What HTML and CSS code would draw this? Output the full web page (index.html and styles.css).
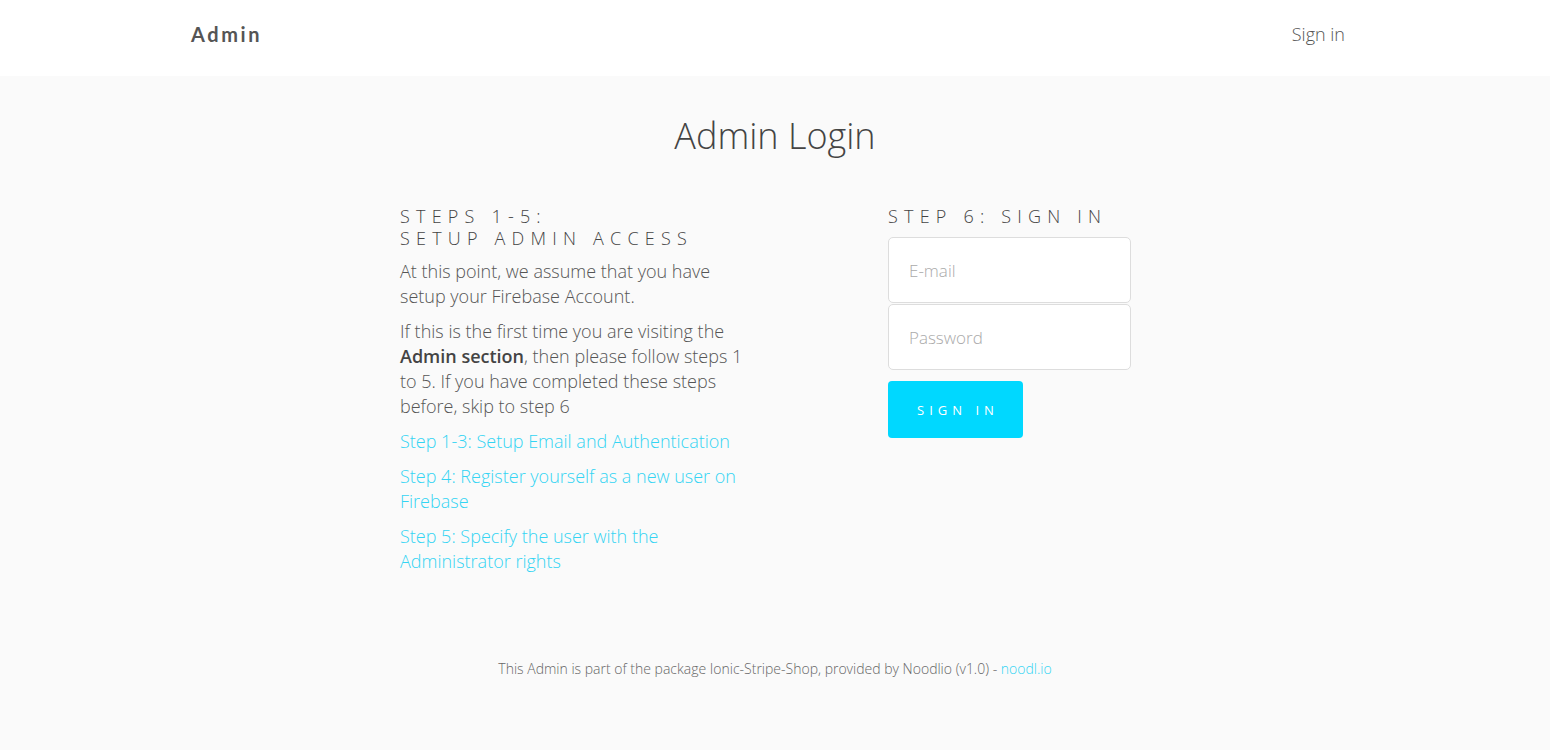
FILE: index.html
```html
<!DOCTYPE html>
<html>
<head>
<meta charset="utf-8">
<link rel="stylesheet" href="styles.css">
</head>
<body>
<header class="topbar">
  <div class="topbar-inner">
    <a class="brand">Admin</a>
    <a class="nav-link">Sign in</a>
  </div>
</header>
<main class="main">
  <h1 class="title">Admin Login</h1>
  <div class="columns">
    <section class="col-left">
      <h3 class="step-heading">Steps 1-5:<br>Setup admin access</h3>
      <p>At this point, we assume that you have setup your Firebase Account.</p>
      <p>If this is the first time you are visiting the <b>Admin section</b>, then please follow steps 1 to 5. If you have completed these steps before, skip to step 6</p>
      <p><a class="link">Step 1-3: Setup Email and Authentication</a></p>
      <p><a class="link">Step 4: Register yourself as a new user on Firebase</a></p>
      <p><a class="link">Step 5: Specify the user with the Administrator rights</a></p>
    </section>
    <section class="col-right">
      <h3 class="step-heading">Step 6: Sign in</h3>
      <div class="inputs">
        <input class="field" type="text" placeholder="E-mail">
        <input class="field" type="password" placeholder="Password">
      </div>
      <button class="btn">Sign in</button>
    </section>
  </div>
  <footer class="footer">This Admin is part of the package Ionic-Stripe-Shop, provided by Noodlio (v1.0) - <a class="link">noodl.io</a></footer>
</main>
</body>
</html>
```
FILE: styles.css
```css
* { box-sizing: border-box; }
html, body { margin: 0; padding: 0; }
body {
  font-family: "Open Sans", "Liberation Sans", sans-serif;
  font-weight: 300;
  color: #555;
  background: #fafafa;
  height: 750px;
}
.topbar {
  background: #fff;
  height: 76px;
}
.topbar-inner {
  width: 1170px;
  margin: 0 auto;
  height: 76px;
  display: flex;
  align-items: center;
  justify-content: space-between;
  padding: 0 15px 0 1px;
}
.brand {
  font-family: "Lato", "Open Sans", sans-serif;
  font-weight: 700;
  font-size: 20px;
  letter-spacing: 2.6px;
  color: #555;
  margin-top: -8px;
}
.nav-link {
  font-size: 18px;
  color: #555;
  margin-top: -8px;
}
.main {
  display: flex;
  flex-direction: column;
  align-items: center;
}
.title {
  font-size: 36px;
  font-weight: 300;
  color: #444;
  margin: 36px 0 46px;
  line-height: 48px;
}
.columns {
  display: flex;
  gap: 138px;
  width: 750px;
}
.col-left { width: 350px; }
.col-right { width: 243px; }
.step-heading {
  font-size: 18px;
  font-weight: 300;
  text-transform: uppercase;
  letter-spacing: 6.2px;
  line-height: 22px;
  color: #444;
  margin: -1px 0 4px;
}
.col-left .step-heading { margin-bottom: 10px; }
.col-left p {
  font-size: 18px;
  line-height: 25px;
  margin: 0 0 10px;
  color: #555;
}
.col-left b { font-weight: 600; color: #444; }
.link { color: #33d4f3; }
.inputs {
  margin-top: 10px;
  display: flex;
  flex-direction: column;
  gap: 1px;
}
.field {
  width: 243px;
  height: 66px;
  border: 1px solid #ddd;
  border-radius: 5px;
  background: #fff;
  padding: 0 20px;
  font-family: "Open Sans", sans-serif;
  font-weight: 300;
  font-size: 17px;
  color: #555;
  outline: none;
}
.field::placeholder { color: #aaa; }
.btn {
  margin-top: 11px;
  width: 135px;
  height: 57px;
  background: #00d8ff;
  border: none;
  border-radius: 4px;
  color: #fff;
  font-family: "Open Sans", sans-serif;
  font-weight: 400;
  font-size: 13px;
  text-transform: uppercase;
  letter-spacing: 5px;
  padding: 0 0 0 5px;
}
.footer {
  margin-top: 75px;
  font-size: 14px;
  color: #666;
}
```
